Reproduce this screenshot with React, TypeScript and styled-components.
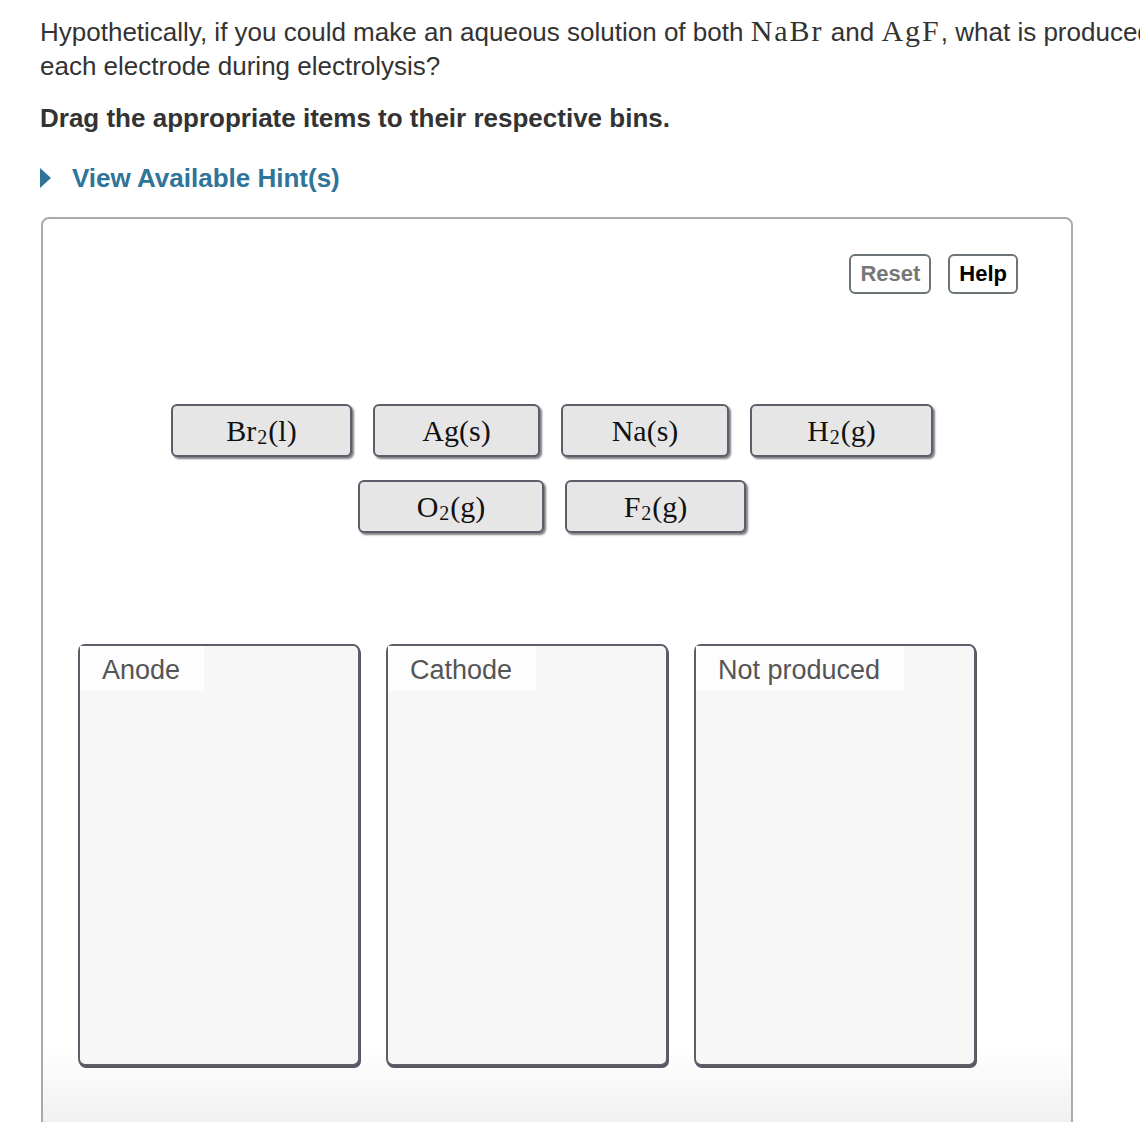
import React from "react";
import styled, { createGlobalStyle } from "styled-components";

const GlobalStyle = createGlobalStyle`
  body {
    margin: 0;
    background: #fff;
    font-family: "Liberation Sans", Arial, sans-serif;
    color: #333;
  }
`;

const Page = styled.div`
  padding: 14px 0 0 40px;
  height: 1122px;
  box-sizing: border-box;
  overflow: hidden;
`;

const Question = styled.p`
  margin: 0;
  font-size: 26px;
  line-height: 34px;
  white-space: nowrap;
`;

const Formula = styled.span`
  font-family: "Liberation Serif", "Times New Roman", serif;
  font-size: 30px;
  letter-spacing: 2px;
`;

const Instruction = styled.p`
  margin: 18px 0 0;
  font-size: 26px;
  line-height: 34px;
  font-weight: bold;
`;

const HintToggle = styled.div`
  margin-top: 26px;
  display: flex;
  align-items: center;
  gap: 21px;
  font-size: 26px;
  line-height: 34px;
  font-weight: bold;
  color: #2f7499;
`;

const Arrow = styled.span`
  width: 0;
  height: 0;
  border-top: 10px solid transparent;
  border-bottom: 10px solid transparent;
  border-left: 11px solid #2f7499;
`;

const Panel = styled.div`
  margin: 22px 0 0 1px;
  width: 1032px;
  height: 940px;
  box-sizing: border-box;
  border: 2px solid #aaa;
  border-radius: 8px;
  background: linear-gradient(to bottom, #fff 0, #fff 830px, #f0f0f0 905px, #ececec 940px);
  display: flex;
  flex-direction: column;
`;

const Toolbar = styled.div`
  display: flex;
  justify-content: flex-end;
  gap: 17px;
  padding: 35px 53px 0 0;
`;

const ToolButton = styled.button<{ $muted?: boolean }>`
  height: 40px;
  padding: 0 9px;
  border: 2px solid #6b7476;
  border-radius: 6px;
  background: #fff;
  font-family: "Liberation Sans", Arial, sans-serif;
  font-size: 22px;
  font-weight: bold;
  color: ${(p) => (p.$muted ? "#777" : "#000")};
`;

const Tray = styled.div`
  margin-top: 110px;
  display: flex;
  flex-direction: column;
  align-items: center;
  gap: 23px;
  padding-right: 10px;
`;

const TrayRow = styled.div`
  display: flex;
  gap: 21px;
`;

const Item = styled.div<{ $w: number }>`
  width: ${(p) => p.$w}px;
  height: 53px;
  box-sizing: border-box;
  border: 2px solid #5d5e69;
  border-radius: 6px;
  background: #e6e6e6;
  box-shadow: 2px 2px 2px rgba(40, 40, 50, 0.6);
  display: flex;
  align-items: center;
  justify-content: center;
  font-family: "Liberation Serif", "Times New Roman", serif;
  font-size: 30px;
  color: #111;
`;

const Sub = styled.span`
  font-size: 20px;
  position: relative;
  top: 7px;
  margin: 0 1px;
`;

const Bins = styled.div`
  margin-top: 111px;
  padding-left: 35px;
  display: flex;
  gap: 26px;
`;

const Bin = styled.div`
  width: 282px;
  height: 422px;
  box-sizing: border-box;
  border: 2px solid #5d5e69;
  border-radius: 7px;
  background: #f7f7f7;
  box-shadow: 1px 2px 0 #55565f;
  display: flex;
  flex-direction: column;
  align-items: flex-start;
`;

const BinLabel = styled.div`
  background: #fdfdfd;
  padding: 0 24px 0 22px;
  height: 45px;
  line-height: 48px;
  font-size: 27px;
  color: #555;
`;

const items = [
  [
    { el: "Br", sub: "2", tail: "(l)", w: 181 },
    { el: "Ag", tail: "(s)", w: 167 },
    { el: "Na", tail: "(s)", w: 168 },
    { el: "H", sub: "2", tail: "(g)", w: 183 },
  ],
  [
    { el: "O", sub: "2", tail: "(g)", w: 186 },
    { el: "F", sub: "2", tail: "(g)", w: 181 },
  ],
];

export default function App() {
  return (
    <Page>
      <GlobalStyle />
      <Question>
        Hypothetically, if you could make an aqueous solution of both <Formula>NaBr</Formula> and{" "}
        <Formula>AgF</Formula>, what is produced at
        <br />
        each electrode during electrolysis?
      </Question>
      <Instruction>Drag the appropriate items to their respective bins.</Instruction>
      <HintToggle>
        <Arrow />
        View Available Hint(s)
      </HintToggle>
      <Panel>
        <Toolbar>
          <ToolButton $muted>Reset</ToolButton>
          <ToolButton>Help</ToolButton>
        </Toolbar>
        <Tray>
          {items.map((row, i) => (
            <TrayRow key={i}>
              {row.map((it) => (
                <Item key={it.el} $w={it.w}>
                  {it.el}
                  {it.sub && <Sub>{it.sub}</Sub>}
                  {it.tail}
                </Item>
              ))}
            </TrayRow>
          ))}
        </Tray>
        <Bins>
          <Bin>
            <BinLabel>Anode</BinLabel>
          </Bin>
          <Bin>
            <BinLabel>Cathode</BinLabel>
          </Bin>
          <Bin>
            <BinLabel>Not produced</BinLabel>
          </Bin>
        </Bins>
      </Panel>
    </Page>
  );
}
